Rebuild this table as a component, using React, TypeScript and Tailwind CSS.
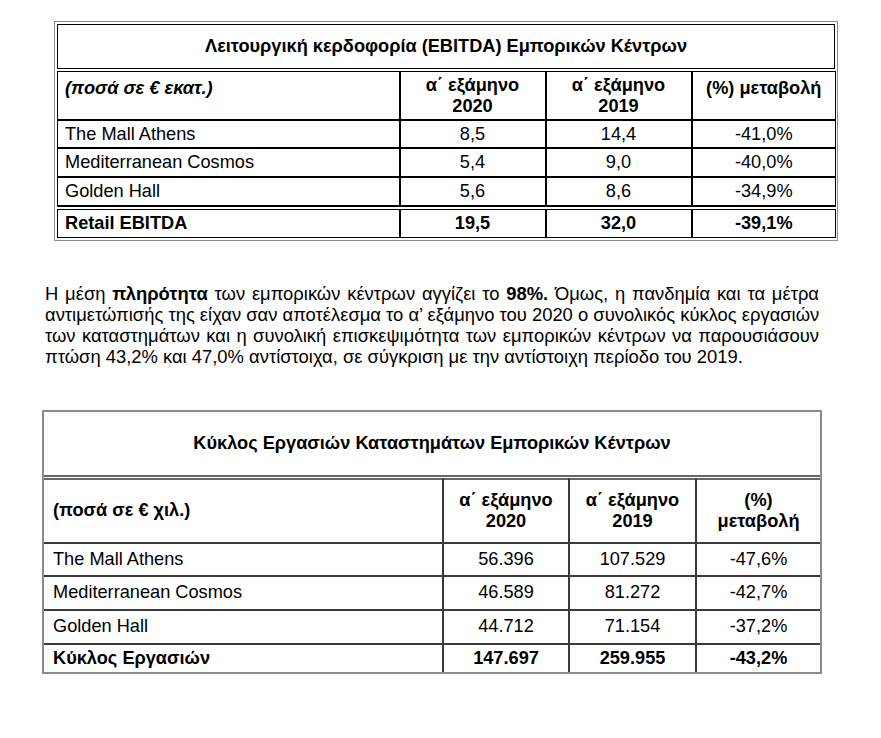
import * as React from "react";

const font = "font-['Liberation_Sans',Arial,sans-serif]";

interface Row {
  label: string;
  values: string[];
}

const ebitdaRows: Row[] = [
  { label: "The Mall Athens", values: ["8,5", "14,4", "-41,0%"] },
  { label: "Mediterranean Cosmos", values: ["5,4", "9,0", "-40,0%"] },
  { label: "Golden Hall", values: ["5,6", "8,6", "-34,9%"] },
];

const turnoverRows: Row[] = [
  { label: "The Mall Athens", values: ["56.396", "107.529", "-47,6%"] },
  { label: "Mediterranean Cosmos", values: ["46.589", "81.272", "-42,7%"] },
  { label: "Golden Hall", values: ["44.712", "71.154", "-37,2%"] },
];

const paragraphLines = [
  <>Η μέση <b>πληρότητα</b> των εμπορικών κέντρων αγγίζει το <b>98%.</b> Όμως, η πανδημία και τα μέτρα</>,
  <>αντιμετώπισής της είχαν σαν αποτέλεσμα το α’ εξάμηνο του 2020 ο συνολικός κύκλος εργασιών</>,
  <>των καταστημάτων και η συνολική επισκεψιμότητα των εμπορικών κέντρων να παρουσιάσουν</>,
];

function EbitdaTable() {
  return (
    <div className="ml-[54px] mt-[21px] w-[784px] border border-[#8c8c8c] p-[2px]">
      <div className="flex h-[45px] items-center justify-center border border-black text-[18.2px] font-bold">
        Λειτουργική κερδοφορία (EBITDA) Εμπορικών Κέντρων
      </div>
      <table className="mt-[2px] w-[778px] table-fixed border-collapse">
        <colgroup>
          <col className="w-[342px]" />
          <col className="w-[146px]" />
          <col className="w-[146px]" />
          <col className="w-[144px]" />
        </colgroup>
        <tbody>
          <tr className="h-[48px] align-top font-bold">
            <td className="border border-black border-b-2 px-[7px] pt-[3px] italic">(ποσά σε € εκατ.)</td>
            <td className="border-2 border-black border-t border-b-2 pt-[3px] text-center leading-[21px]">
              α΄ εξάμηνο
              <br />
              2020
            </td>
            <td className="border-2 border-black border-t border-b-2 pt-[3px] text-center leading-[21px]">
              α΄ εξάμηνο
              <br />
              2019
            </td>
            <td className="border border-black border-b-2 pt-[3px] text-center">(%) μεταβολή</td>
          </tr>
          {ebitdaRows.map((row, i) => (
            <tr key={row.label} className={i === 0 ? "h-[28px]" : "h-[29px]"}>
              <td className="border border-black border-b-2 px-[7px] leading-[20px]">{row.label}</td>
              {row.values.map((v, j) => (
                <td
                  key={j}
                  className={
                    j < 2
                      ? "border-2 border-black text-center leading-[20px]"
                      : "border border-black border-b-2 text-center leading-[20px]"
                  }
                >
                  {v}
                </td>
              ))}
            </tr>
          ))}
        </tbody>
      </table>
      <table className="mt-[2px] w-[778px] table-fixed border-collapse font-bold">
        <colgroup>
          <col className="w-[342px]" />
          <col className="w-[146px]" />
          <col className="w-[146px]" />
          <col className="w-[144px]" />
        </colgroup>
        <tbody>
          <tr className="h-[28px]">
            <td className="border border-black px-[7px]">Retail EBITDA</td>
            <td className="border-2 border-black border-y text-center">19,5</td>
            <td className="border-2 border-black border-y text-center">32,0</td>
            <td className="border border-black text-center">-39,1%</td>
          </tr>
        </tbody>
      </table>
    </div>
  );
}

function TurnoverTable() {
  const cell = "border-2 border-[#3a3a3a]";
  return (
    <div className="ml-[42px] w-[780px] border-2 border-[#8c8c8c]">
      <div className="flex h-[65px] items-center justify-center border-b-2 border-[#666] text-[18.2px] font-bold">
        Κύκλος Εργασιών Καταστημάτων Εμπορικών Κέντρων
      </div>
      <table className="mt-[1px] w-[776px] table-fixed border-collapse">
        <colgroup>
          <col className="w-[399px]" />
          <col className="w-[126px]" />
          <col className="w-[127px]" />
          <col className="w-[124px]" />
        </colgroup>
        <tbody>
          <tr className="h-[64px] font-bold leading-[21px]">
            <td className={`${cell} border-l-0 border-t-[#666] px-[9px]`}>(ποσά σε € χιλ.)</td>
            <td className={`${cell} border-t-[#666] text-center`}>
              α΄ εξάμηνο
              <br />
              2020
            </td>
            <td className={`${cell} border-t-[#666] text-center`}>
              α΄ εξάμηνο
              <br />
              2019
            </td>
            <td className={`${cell} border-r-0 border-t-[#666] text-center`}>
              (%)
              <br />
              μεταβολή
            </td>
          </tr>
          {turnoverRows.map((row, i) => (
            <tr key={row.label} className={i === 0 ? "h-[33px]" : "h-[34px]"}>
              <td className={`${cell} border-l-0 px-[9px]`}>{row.label}</td>
              {row.values.map((v, j) => (
                <td key={j} className={`${cell} text-center ${j === 2 ? "border-r-0" : ""}`}>
                  {v}
                </td>
              ))}
            </tr>
          ))}
          <tr className="h-[27px] font-bold">
            <td className={`${cell} border-b-0 border-l-0 px-[9px]`}>Κύκλος Εργασιών</td>
            <td className={`${cell} border-b-0 text-center`}>147.697</td>
            <td className={`${cell} border-b-0 text-center`}>259.955</td>
            <td className={`${cell} border-b-0 border-r-0 text-center`}>-43,2%</td>
          </tr>
        </tbody>
      </table>
    </div>
  );
}

export default function App() {
  return (
    <div className={`min-h-[738px] w-[881px] bg-white pb-[60px] text-[18.2px] text-black ${font}`}>
      <EbitdaTable />

      <div className="ml-[45px] mt-[42px] w-[774px] text-[18.4px] leading-[21px]">
        {paragraphLines.map((line, i) => (
          <div key={i} className="whitespace-nowrap text-justify [text-align-last:justify]">
            {line}
          </div>
        ))}
        <div className="whitespace-nowrap">
          πτώση 43,2% και 47,0% αντίστοιχα, σε σύγκριση με την αντίστοιχη περίοδο του 2019.
        </div>
      </div>

      <div className="mt-[43px]">
        <TurnoverTable />
      </div>
    </div>
  );
}
